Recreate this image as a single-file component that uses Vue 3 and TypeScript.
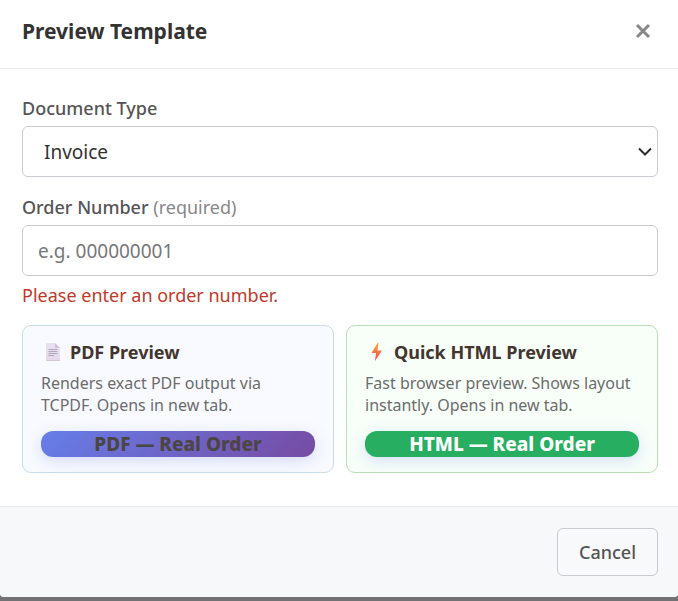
<script setup lang="ts">
import { ref } from 'vue'

const documentType = ref('Invoice')
const orderNumber = ref('')
</script>

<template>
  <div class="modal" role="dialog" aria-labelledby="modal-title">
    <header class="head">
      <h2 id="modal-title">Preview Template</h2>
      <button class="close" type="button" aria-label="Close">
        <svg width="16" height="16" viewBox="0 0 16 16" aria-hidden="true">
          <path d="M2 2 L14 14 M14 2 L2 14" />
        </svg>
      </button>
    </header>

    <main class="body">
      <label class="label" for="doc-type">Document Type</label>
      <div class="select-wrap">
        <select id="doc-type" v-model="documentType" class="field select">
          <option>Invoice</option>
        </select>
        <svg class="chevron" width="14" height="10" viewBox="0 0 14 10" aria-hidden="true">
          <path d="M1 1.5 L7 7.5 L13 1.5" />
        </svg>
      </div>

      <label class="label" for="order-number">Order Number <span>(required)</span></label>
      <input id="order-number" v-model="orderNumber" class="field" type="text" placeholder="e.g. 000000001" />
      <p class="error">Please enter an order number.</p>

      <div class="cards">
        <section class="card pdf">
          <h3>
            <svg width="24" height="18" viewBox="0 0 24 18" aria-hidden="true">
              <defs>
                <linearGradient id="page" x1="0" y1="0" x2="0" y2="1">
                  <stop offset="0" stop-color="#e8e0f2" />
                  <stop offset="1" stop-color="#e6d8ee" />
                </linearGradient>
              </defs>
              <path d="M5 0 H14 L19 5 V18 H5 Z" fill="url(#page)" />
              <path d="M14 0 L19 5 H14 Z" fill="#cbc4d4" />
              <path d="M5 17.5 H19" stroke="#d3c6dc" />
              <path d="M7.5 6.5 H16.5 M7.5 8.5 H16.5 M7.5 10.5 H16.5 M7.5 12.5 H13" stroke="#b0a8b8" />
            </svg>
            PDF Preview
          </h3>
          <p>Renders exact PDF output via TCPDF. Opens in new tab.</p>
          <button class="action" type="button">PDF — Real Order</button>
        </section>
        <section class="card html">
          <h3>
            <svg width="24" height="18" viewBox="0 0 24 18" aria-hidden="true">
              <defs>
                <linearGradient id="bolt" x1="0" y1="0" x2="0" y2="1">
                  <stop offset="0" stop-color="#fbab40" />
                  <stop offset="1" stop-color="#f0404e" />
                </linearGradient>
              </defs>
              <path d="M12.5 0 L6.5 10 H11 L10 18 L17 7.5 H12.5 L13.5 0 Z" fill="url(#bolt)" />
            </svg>
            Quick HTML Preview
          </h3>
          <p>Fast browser preview. Shows layout instantly. Opens in new tab.</p>
          <button class="action" type="button">HTML — Real Order</button>
        </section>
      </div>
    </main>

    <footer class="foot">
      <button class="cancel" type="button">Cancel</button>
    </footer>
  </div>
</template>

<style>
body {
  background: #727274;
}
</style>

<style scoped>
.modal,
.modal * {
  box-sizing: border-box;
}

.modal {
  background: #fff;
  border-radius: 0 0 4px 4px;
  overflow: hidden;
  margin-bottom: 4px;
  font-family: "Noto Sans", sans-serif;
  color: #333;
}

button,
select,
input {
  font-family: inherit;
}

h2,
h3,
p {
  margin: 0;
}

.head {
  display: flex;
  align-items: center;
  justify-content: space-between;
  padding: 15px 20px 21px 22px;
  border-bottom: 1px solid #e8e8ea;
}

h2 {
  font-size: 21px;
  line-height: 32px;
  font-weight: 700;
}

.close {
  display: flex;
  align-items: center;
  justify-content: center;
  width: 30px;
  height: 32px;
  padding: 0;
  border: 0;
  background: none;
}

.close path {
  fill: none;
  stroke: #888;
  stroke-width: 3;
}

.body {
  padding: 26px 20px 33px 22px;
}

.label {
  display: block;
  margin-bottom: 4px;
  font-size: 18px;
  line-height: 27px;
  font-weight: 500;
  color: #555;
}

.label span {
  font-weight: 400;
  color: #888;
}

.field {
  display: block;
  width: 100%;
  height: 51px;
  padding: 0 15px;
  border: 1px solid #c8ccd2;
  border-radius: 6px;
  background: #fff;
  font-size: 19px;
  color: #333;
}

.field::placeholder {
  color: #777;
  opacity: 1;
}

.select-wrap {
  position: relative;
  margin-bottom: 17px;
}

.select {
  appearance: none;
  padding: 0 40px 0 21px;
}

.chevron {
  position: absolute;
  right: 6px;
  top: 21px;
  pointer-events: none;
}

.chevron path {
  fill: none;
  stroke: #2c2c2e;
  stroke-width: 2;
}

.error {
  margin-top: 6px;
  font-size: 18px;
  line-height: 26px;
  color: #c0392b;
}

.cards {
  display: grid;
  grid-template-columns: 1fr 1fr;
  gap: 12px;
  margin-top: 17px;
}

.card {
  padding: 13px 18px 15px;
  border: 1px solid #c8dcf0;
  border-radius: 9px;
  background: #f9faff;
}

.card.html {
  border-color: #b8dfb8;
  background: #f8fff9;
}

h3 {
  display: flex;
  align-items: center;
  gap: 5px;
  margin-bottom: 7px;
  font-size: 18px;
  line-height: 26px;
  font-weight: 700;
  color: #43352f;
}

.card p {
  margin-bottom: 15px;
  font-size: 16px;
  line-height: 22px;
  color: #6c6c6c;
}

.action {
  display: block;
  width: 100%;
  height: 26px;
  padding: 0;
  border: 0;
  border-radius: 12px;
  background: linear-gradient(135deg, #667eea 0%, #764ba2 100%);
  box-shadow: 0 4px 15px rgba(102, 126, 234, 0.25);
  font-size: 19px;
  line-height: 26px;
  font-weight: 800;
  color: #4c4545;
}

.html .action {
  background: #27ae60;
  color: #fff;
}

.foot {
  display: flex;
  justify-content: flex-end;
  padding: 21px 20px;
  border-top: 1px solid #e8eaec;
  background: #f6f8fa;
}

.cancel {
  height: 48px;
  padding: 0 21px;
  border: 1px solid #c8cacf;
  border-radius: 6px;
  background: #f8f9fb;
  font-size: 18px;
  font-weight: 500;
  color: #555;
}
</style>
